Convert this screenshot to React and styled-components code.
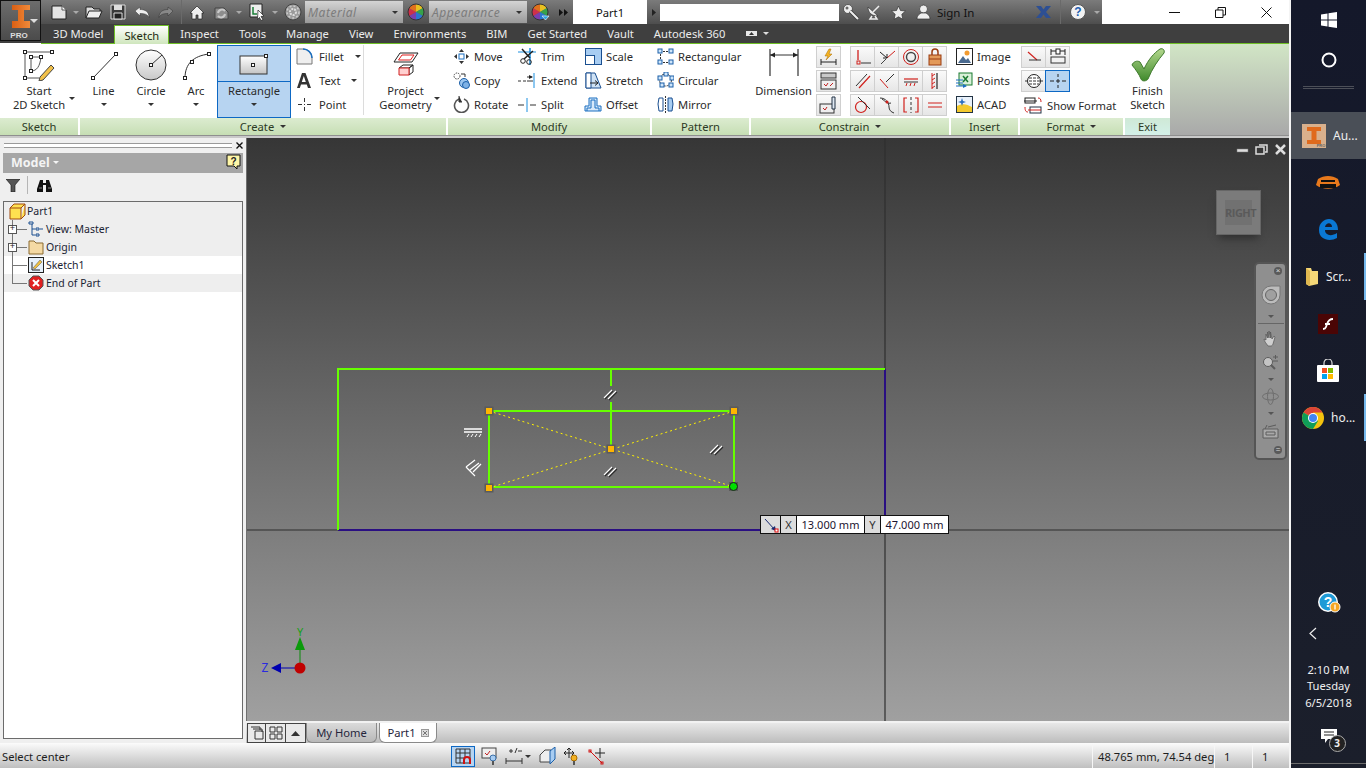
import React from "react";
import styled, { createGlobalStyle } from "styled-components";

const GlobalStyle = createGlobalStyle`
  html, body { margin: 0; padding: 0; overflow: hidden; background: #171b28; }
  body { font-family: "Noto Sans", "Open Sans", sans-serif; font-size: 11.2px; color: #2b2b2b; }
`;

/* ---------- small helpers ---------- */
const Svg = ({ w, h, children }) => (
  <svg width={w} height={h} viewBox={`0 0 ${w} ${h}`} fill="none" style={{ display: "block", flex: "none" }}>
    {children}
  </svg>
);
const Caret = styled.span`
  display: block;
  flex: none;
  width: 0;
  height: 0;
  border-left: 3px solid transparent;
  border-right: 3px solid transparent;
  border-top: 3px solid ${(p) => p.$color || "#333"};
`;

/* ---------- quick access icons ---------- */
const NewIcon = () => (
  <Svg w={16} h={15}><path d="M1 1h10l4 4v9H1z" fill="#e4e4e4" stroke="#222" /><path d="M11 1v4h4" fill="#fff" stroke="#555" /></Svg>
);
const OpenIcon = () => (
  <Svg w={18} h={14}><path d="M1 13V2h6l2 2h6v2" fill="#ddd" stroke="#222" /><path d="M1 13l3-7h13l-3 7z" fill="#eee" stroke="#222" /></Svg>
);
const SaveIcon = () => (
  <Svg w={16} h={16}><path d="M1 1h14v14H1z" fill="#3a3a3a" stroke="#ddd" /><path d="M4 1h8v5H4z" fill="#ddd" /><path d="M4 9h8v6H4z" fill="#222" stroke="#ddd" /></Svg>
);
const ArrowBack = ({ color, flip }) => (
  <Svg w={16} h={12}>
    <g transform={flip ? "matrix(-1 0 0 1 16 0)" : undefined}>
      <path d="M1 5l5-4v2.500c5 0 9 2 9 8-1.500-3-4-4-9-4V10z" fill={color} stroke="#333" strokeWidth=".5" />
    </g>
  </Svg>
);
const HomeIcon = () => (
  <Svg w={16} h={15}><path d="M8 1L1 8h2v6h4v-4h2v4h4V8h2z" fill="#eee" stroke="#222" strokeWidth=".7" /></Svg>
);
const UpdateIcon = () => (
  <Svg w={18} h={15}><path d="M2 3h9l4 4v7H2z" fill="#8d8d8d" stroke="#444" /><path d="M5 8a4 4 0 0 1 7-2M12 9a4 4 0 0 1-7 2" stroke="#c9c9c9" strokeWidth="2" /></Svg>
);
const SelectIcon = () => (
  <Svg w={17} h={18}><path d="M1 1h12v13H1z" fill="#eee" stroke="#222" /><path d="M4 4v7h4" stroke="#1a7f37" strokeWidth="1.500" /><path d="M9 7l6 6-3 .500 2 3-2 1-1.500-3-2 2z" fill="#fff" stroke="#222" strokeWidth=".7" /></Svg>
);
const MaterialBall = () => (
  <Svg w={18} h={18}><circle cx="9" cy="9" r="8" fill="#9a9a9a" stroke="#444" /><circle cx="9" cy="9" r="3" stroke="#ddd" strokeWidth="2" strokeDasharray="2 1" /><circle cx="9" cy="9" r="6" stroke="#ccc" strokeWidth="1.500" strokeDasharray="2 2" /></Svg>
);
const ColorWheel = ({ drop }) => (
  <Svg w={19} h={19}>
    <path d="M9 9V1a8 8 0 0 1 7 4z" fill="#e8c020" />
    <path d="M9 9l7-4a8 8 0 0 1 0 8z" fill="#37a24a" />
    <path d="M9 9l7 4a8 8 0 0 1-7 4z" fill="#2b78d0" />
    <path d="M9 9v8a8 8 0 0 1-7-4z" fill="#7a3fb0" />
    <path d="M9 9l-7 4a8 8 0 0 1 0-8z" fill="#d0304a" />
    <path d="M9 9L2 5a8 8 0 0 1 7-4z" fill="#e0701c" />
    <circle cx="9" cy="9" r="8" stroke="#333" />
    {drop && <path d="M11 13h7l-3.500 4z" fill="#29a6e0" stroke="#fff" strokeWidth=".6" />}
  </Svg>
);
const WrenchIcon = () => (
  <Svg w={17} h={17}><circle cx="5" cy="5" r="4.500" fill="#eee" stroke="#333" strokeWidth=".7" /><path d="M7 7l8 8" stroke="#333" strokeWidth="3.400" /><path d="M7 7l8 8" stroke="#eee" strokeWidth="2.200" /><circle cx="4" cy="4" r="1.500" fill="#666" /></Svg>
);
const SatelliteIcon = () => (
  <Svg w={16} h={16}><path d="M2 3c0 6 4 9 10 9z" fill="#eee" stroke="#333" strokeWidth=".7" /><path d="M7 8l6-6M6 12l-2 3h7l-2-3" stroke="#eee" strokeWidth="1.500" /></Svg>
);
const StarIcon = () => (
  <Svg w={15} h={15}><path d="M7.500 1l2 4.500 5 .500-3.700 3.300 1 5-4.300-2.500-4.300 2.500 1-5L.5 6l5-.5z" fill="#eee" stroke="#333" strokeWidth=".7" /></Svg>
);
const PersonIcon = () => (
  <Svg w={15} h={16}><circle cx="7.500" cy="5" r="4" fill="#eee" stroke="#333" strokeWidth=".7" /><path d="M1 15c0-4 3-5 4-6h5c1 1 4 2 4 6z" fill="#eee" stroke="#333" strokeWidth=".7" /></Svg>
);
const ExchangeIcon = () => (
  <Svg w={15} h={12}><path d="M0 0h5l2.500 3.500L10 0h5l-5 6 5 6h-5L7.500 8.500 5 12H0l5-6z" fill="#2d4f93" /></Svg>
);
const HelpRound = () => (
  <Svg w={16} h={16}><circle cx="8" cy="8" r="7.500" fill="#f3f3f3" stroke="#555" /><text x="8" y="12" textAnchor="middle" fontSize="12" fontWeight="700" fontFamily="Liberation Sans" fill="#1f5fb0">?</text></Svg>
);

/* ---------- ribbon icons ---------- */
const Handle = ({ x, y }) => <rect x={x - 1.500} y={y - 1.500} width="3" height="3" fill="#fff" stroke="#222" />;
const StartSketchIcon = () => (
  <Svg w={32} h={32}>
    <path d="M2 3h27M2 3v26M2 29h14" stroke="#555" />
    <path d="M8 8h10M8 8v14M8 22c6 0 9-5 10-14" stroke="#555" />
    <Handle x={2} y={3} /><Handle x={29} y={3} /><Handle x={2} y={29} /><Handle x={8} y={8} /><Handle x={18} y={8} /><Handle x={8} y={22} />
    <path d="M17 28l11-12 3 3-11 12-4 1z" fill="#f2c14a" stroke="#444" />
  </Svg>
);
const LineIcon = () => (
  <Svg w={30} h={32}><path d="M4 29L27 5" stroke="#333" /><Handle x={4} y={29} /><Handle x={27} y={5} /></Svg>
);
const CircleIcon = () => (
  <Svg w={32} h={32}><defs><linearGradient id="cg" x1="0" y1="0" x2="0" y2="1"><stop stopColor="#fff" /><stop offset="1" stopColor="#c8c8c8" /></linearGradient></defs><circle cx="16" cy="16" r="15" fill="url(#cg)" stroke="#333" /><path d="M16 16L27 6" stroke="#333" /><Handle x={16} y={16} /></Svg>
);
const ArcIcon = () => (
  <Svg w={30} h={32}><path d="M4 29c0-14 8-22 24-24" stroke="#333" /><Handle x={4} y={29} /><Handle x={11} y={13} /><Handle x={28} y={5} /></Svg>
);
const RectIcon = () => (
  <Svg w={30} h={22}><defs><linearGradient id="rg" x1="0" y1="0" x2="0" y2="1"><stop stopColor="#fff" /><stop offset="1" stopColor="#c4c4c4" /></linearGradient></defs><rect x="1" y="3" width="27" height="18" fill="url(#rg)" stroke="#333" /><Handle x={14} y={12} /><Handle x={27} y={3} /></Svg>
);
const ProjectIcon = () => (
  <Svg w={26} h={30}>
    <path d="M7 3h18l-6 9H1z" fill="#fff" stroke="#222" /><path d="M9 5h12l-3.500 5H5.500z" stroke="#e02020" />
    <path d="M6 18l4-3h10l-4 3zM16 18l4-3v7l-4 3z" fill="#fff" stroke="#222" /><path d="M6 18h10v7H6z" fill="#ffd0d0" stroke="#d02020" />
  </Svg>
);
const FilletIcon = () => (
  <Svg w={17} h={17}><path d="M1 16V1h6c5 0 9 4 9 9v6z" fill="#efefef" stroke="#777" /><path d="M7 1c5 0 9 4 9 9" stroke="#1b6fc0" strokeWidth="1.500" /></Svg>
);
const TextIcon = () => (
  <Svg w={16} h={17}><path d="M6 1h3.500L15 16h-3l-1.200-3.500H5L3.800 16H1zM5.800 10h4L7.800 4z" fill="#333" fillRule="evenodd" /></Svg>
);
const PointIcon = () => (
  <Svg w={15} h={15}><path d="M7.500 1v4M7.500 10v4M1 7.500h4M10 7.500h4" stroke="#333" /><rect x="7" y="7" width="1" height="1" fill="#333" /></Svg>
);
const MoveIcon = () => (
  <Svg w={17} h={17}><path d="M8.500 1l2.500 3H6zM8.500 16L6 13h5zM1 8.500L4 6v5zM16 8.500L13 6v5z" fill="#333" /><rect x="6" y="6" width="5" height="5" fill="#fff" stroke="#1b6fc0" /></Svg>
);
const CopyIcon = () => (
  <Svg w={17} h={17}><circle cx="11" cy="11" r="4.500" fill="#9cc6f0" stroke="#1b5fa8" /><circle cx="13" cy="13" r="3.500" fill="#7fb2e6" stroke="#1b5fa8" /><circle cx="4" cy="4" r="3" fill="#fff" stroke="#444" strokeDasharray="1.500 1" /><path d="M8 2h4v3" stroke="#333" /></Svg>
);
const RotateIcon = () => (
  <Svg w={17} h={17}><path d="M6 3a7 7 0 1 0 5 0" stroke="#555" strokeWidth="1.600" /><path d="M6 0v6h3" fill="#333" stroke="#333" /></Svg>
);
const TrimIcon = () => (
  <Svg w={18} h={17}><path d="M12 0v17" stroke="#1b8fe0" strokeWidth="1.500" /><path d="M0 4h18" stroke="#1b8fe0" /><path d="M4 1l8 9M15 3l-9 8" stroke="#222" strokeWidth="1.500" /><circle cx="5" cy="13" r="2.300" stroke="#222" /><circle cx="11" cy="14" r="2.300" stroke="#222" /></Svg>
);
const ExtendIcon = () => (
  <Svg w={18} h={17}><path d="M16 1v15" stroke="#1b8fe0" /><path d="M0 9h3M5 9h3M9 5h5" stroke="#333" /><path d="M11 3l4 2-4 2z" fill="#222" /><path d="M9 9h6" stroke="#333" /></Svg>
);
const SplitIcon = () => (
  <Svg w={18} h={17}><path d="M9 2v14" stroke="#1b8fe0" /><path d="M0 9h6M12 9h6" stroke="#333" /></Svg>
);
const ScaleIcon = () => (
  <Svg w={17} h={17}><rect x=".5" y=".5" width="16" height="16" fill="#a8cdf2" stroke="#1a4f90" /><rect x=".5" y="7.500" width="9" height="9" fill="#fff" stroke="#1a4f90" /></Svg>
);
const StretchIcon = () => (
  <Svg w={17} h={17}><path d="M1 1h9l6 15H1z" fill="#cfe2f5" stroke="#1a4f90" /><path d="M1 1h5v15H1z" fill="#fff" stroke="#1a4f90" /><path d="M5 11h8M10 8.500l3 2.500-3 2.500" stroke="#222" /></Svg>
);
const OffsetIcon = () => (
  <Svg w={18} h={17}><path d="M1 15V10h4V2h8v8h4v5z" fill="#d7e9fa" stroke="#1a6fc0" /><path d="M3 15v-3h4V4h4v8h4v3" stroke="#1a6fc0" /></Svg>
);
const RectPatternIcon = () => {
  const nodes = [[2, 2], [13, 2], [2, 13], [13, 13]];
  return (
    <Svg w={17} h={17}>
      <path d="M3 3.500h11M3.500 3v11M3 14.500h11" stroke="#333" strokeDasharray="2 1" />
      {nodes.map((n) => <rect key={n.join()} x={n[0] - 1} y={n[1] - 1} width="4" height="4" fill="#cfe6fb" stroke="#1b5fa8" />)}
    </Svg>
  );
};
const CircPatternIcon = () => {
  const nodes = [[8, 1], [14, 5], [13, 12], [4, 12], [2, 5]];
  return (
    <Svg w={17} h={17}>
      <circle cx="8.500" cy="8" r="6" stroke="#333" strokeDasharray="2 1" />
      {nodes.map((n) => <rect key={n.join()} x={n[0] - 1} y={n[1] - 1} width="4" height="4" fill="#cfe6fb" stroke="#1b5fa8" />)}
    </Svg>
  );
};
const MirrorIcon = () => (
  <Svg w={17} h={17}><path d="M8.500 0v17" stroke="#333" strokeDasharray="2 1" /><path d="M11 2h4l1 6-1 7h-4z" fill="#a8cdf2" stroke="#1a4f90" /><path d="M6 2H2L1 8l1 7h4z" fill="#fff" stroke="#1a4f90" /></Svg>
);
const DimensionIcon = () => (
  <Svg w={30} h={32}><path d="M1 0v27M29 0v27" stroke="#333" strokeWidth="1.200" /><path d="M1 6h28" stroke="#333" /><path d="M1 6l5-2.500v5zM29 6l-5-2.500v5z" fill="#222" /></Svg>
);
const AutoDimIcon = () => (
  <Svg w={19} h={18}><path d="M10 1L6 8h3l-2 4 6-6h-3l2-5z" fill="#f4b223" stroke="#a86c00" strokeWidth=".5" /><path d="M2 11v6M17 11v6M2 14h15" stroke="#222" /></Svg>
);
const ShowConstraintsIcon = () => (
  <Svg w={19} h={18}><rect x="2" y="1" width="15" height="5" fill="#c9c9c9" stroke="#333" /><rect x="2" y="8" width="15" height="9" fill="#eee" stroke="#333" /><path d="M5 12l2 2 2-3M11 14l3-3" stroke="#c02020" /></Svg>
);
const ConstraintSettingsIcon = () => (
  <Svg w={19} h={18}><rect x="1" y="8" width="14" height="9" fill="#eee" stroke="#333" /><path d="M4 12l2 2 2-3" stroke="#c02020" /><path d="M13 1v12h3V1z" fill="#dfe8f2" stroke="#234" /></Svg>
);
const Con = ({ children }) => <Svg w={18} h={18}>{children}</Svg>;
const red = "#d0201c";
const constraintGrid = [
  <Con><path d="M4 2v10" stroke={red} strokeWidth="1.300" /><rect x="3" y="13" width="3" height="3" stroke={red} /><path d="M7 15h10" stroke="#333" /></Con>,
  <Con><path d="M9 10l8-7" stroke={red} /><path d="M2 4l7 6M9 6v4H5" stroke="#222" /><path d="M3 16l5-5" stroke="#444" /></Con>,
  <Con><circle cx="9" cy="9" r="7.500" stroke={red} /><circle cx="9" cy="9" r="4.500" stroke="#444" strokeWidth="1.400" /></Con>,
  <Con><rect x="3" y="7" width="12" height="10" fill="#e39a5a" stroke="#9b3d10" /><path d="M6 7V4a3 3 0 0 1 6 0v3" stroke="#9b3d10" strokeWidth="1.500" /><path d="M3 11h12" stroke="#9b3d10" /></Con>,
  <Con><path d="M2 14L13 2" stroke="#333" /><path d="M5 16L16 4" stroke={red} strokeWidth="1.200" /></Con>,
  <Con><path d="M8 10L16 2" stroke="#333" /><path d="M2 7l8 9" stroke={red} /></Con>,
  <Con><path d="M2 7h14" stroke={red} strokeWidth="1.200" /><path d="M2 10h14" stroke="#333" /><path d="M5 11l-1 3M9 11l-1 3M13 11l-1 3" stroke={red} /></Con>,
  <Con><path d="M11 1v16" stroke="#333" strokeWidth="1.300" /><path d="M6 1v16M6 4l3-2M6 8l3-2M6 12l3-2M6 16l3-2" stroke={red} /></Con>,
  <Con><circle cx="7" cy="11" r="5.500" stroke={red} strokeWidth="1.200" /><path d="M4 1l12 12" stroke="#333" /></Con>,
  <Con><path d="M2 2c6 0 9 5 9 9 0 3 2 5 5 6M4 3c4 3 6 5 9 4" stroke="#333" /><circle cx="9" cy="6" r="1.500" fill={red} /></Con>,
  <Con><path d="M5 2H2v14h3M13 2h3v14h-3" stroke={red} strokeWidth="1.200" /><path d="M9 1v16" stroke="#333" strokeDasharray="3 2" /></Con>,
  <Con><path d="M2 7h14M2 11h14" stroke={red} strokeWidth="1.200" /></Con>,
];
const ImageIcon = () => (
  <Svg w={17} h={17}><rect x=".5" y=".5" width="16" height="16" fill="#fff" stroke="#222" /><circle cx="11" cy="5" r="2.500" fill="#f29b30" /><path d="M2 15l5-7 3 4 2-2 3 5z" fill="#4a6a90" /></Svg>
);
const PointsIcon = () => (
  <Svg w={18} h={17}><rect x="4" y="1" width="13" height="12" fill="#d9f0d9" stroke="#1a7a30" /><path d="M8 4l5 6M13 4l-5 6" stroke="#1a7a30" strokeWidth="1.500" /><path d="M1 8h7M1 11h7M1 14h10" stroke="#1b6fc0" /><path d="M8 12l4 2-4 2z" fill="#1b6fc0" /></Svg>
);
const AcadIcon = () => (
  <Svg w={17} h={17}><rect x=".5" y=".5" width="16" height="16" fill="#eaf2fb" stroke="#234" /><path d="M1 10c5-3 10-2 15 1v5H1z" fill="#f2c92e" /><path d="M6 2l1 3 3 1-3 1-1 3-1-3-3-1 3-1z" fill="#2b6fc0" /></Svg>
);
const ShowFormatIcon = () => (
  <Svg w={18} h={18}><rect x="1" y="2" width="10" height="5" fill="#fff" stroke="#222" /><path d="M0 5h13" stroke="#222" /><rect x="6" y="11" width="11" height="6" fill="#fff" stroke="#234" /><path d="M4 14h13" stroke={red} /><path d="M14 2c2 0 3 1 3 4M4 16c-2 0-3-1-3-5" stroke={red} /></Svg>
);
const FormatCenterIcon = () => (
  <Svg w={18} h={18}><path d="M9 2v3M9 7v4M9 13v3M1 9h4M7 9h4M13 9h4" stroke="#222" /></Svg>
);
const DimTextIcon = () => (
  <Svg w={18} h={18}><path d="M2 1v6M16 1v6M2 3h14" stroke="#222" /><rect x="7" y="1" width="4" height="5" fill="#fff" stroke="#222" /><rect x="2" y="9" width="14" height="6" fill="#f2f2f2" stroke="#333" /></Svg>
);
const AngleRedIcon = () => (
  <Svg w={18} h={18}><path d="M3 4l9 8" stroke={red} strokeWidth="1.200" /><path d="M4 12h12" stroke="#333" /></Svg>
);
const CenterlineIcon = () => (
  <Svg w={18} h={18}><circle cx="9" cy="9" r="6.500" fill="#fff" stroke="#222" /><path d="M0 9h18M4 6h10M4 12h10" stroke="#333" strokeDasharray="3 1" /></Svg>
);
const CheckIcon = () => (
  <Svg w={34} h={34}>
    <defs><linearGradient id="ck" x1="0" y1="0" x2="0" y2="1"><stop stopColor="#b4d88e" /><stop offset="1" stopColor="#3f8a2c" /></linearGradient></defs>
    <path d="M1 17c1-3 5-5 8-3l4 7C17 12 23 5 29 1c3-1 5 1 4 4-6 7-12 16-16 26-1 2-6 3-7 0-2-5-5-9-9-14z" fill="url(#ck)" stroke="#3f7a2c" />
  </Svg>
);

/* ---------- layout: header ---------- */
const Screen = styled.div`
  width: 1366px;
  height: 768px;
  display: flex;
  overflow: hidden;
`;
const AppWindow = styled.div`
  width: 1289px;
  height: 768px;
  display: flex;
  flex-direction: column;
  background: #efefef;
  border-right: 2px solid #f4f4f4;
`;
const Header = styled.header`
  display: flex;
  height: 43px;
  background: #3f3f3f;
`;
const AppLogo = styled.div`
  width: 39px;
  height: 39px;
  flex: none;
  border: 1px solid #111;
  background: linear-gradient(#6d6d6d, #4b4b4b);
  display: flex;
  flex-direction: column;
  align-items: center;
  position: relative;
  margin-bottom: 2px;
`;
const ProLabel = styled.span`
  font-size: 8px;
  font-weight: 700;
  line-height: 9px;
  color: #ddd;
  margin-left: -3px;
  font-family: "Liberation Sans", sans-serif;
`;
const LogoCaret = styled(Caret)`
  position: absolute;
  right: 2px;
  top: 18px;
  border-left-width: 4px;
  border-right-width: 4px;
  border-top-width: 4px;
`;
const HeaderRows = styled.div`
  flex: 1;
  display: flex;
  flex-direction: column;
  min-width: 0;
`;
const TitleBar = styled.div`
  height: 24px;
  display: flex;
  align-items: stretch;
  padding-left: 7px;
  background: linear-gradient(#7b7b7b, #4e4e4e);
`;
const Slot = styled.div`
  width: ${(p) => p.$w}px;
  flex: none;
  display: flex;
  align-items: center;
  justify-content: center;
`;
const TitleSep = styled(Slot)`
  &::before {
    content: "";
    width: 1px;
    height: 24px;
    background: #6a6a6a;
  }
`;
const StyleCombo = styled.div`
  width: ${(p) => p.$w}px;
  flex: none;
  margin: 1px 0;
  display: flex;
  align-items: center;
  justify-content: space-between;
  padding: 0 5px 0 3px;
  box-sizing: border-box;
  background: linear-gradient(#d4d4d4, #9a9a9a);
  font-style: italic;
  font-size: 12px;
  letter-spacing: .5px;
  color: #7c7c7c;
`;
const DocTitle = styled.div`
  width: 74px;
  flex: none;
  background: #fff;
  color: #111;
  display: flex;
  align-items: center;
  justify-content: center;
`;
const SearchBox = styled.div`
  width: 179px;
  flex: none;
  margin: 4px 0 3px;
  background: #fff;
`;
const SignIn = styled(Slot)`
  justify-content: flex-start;
  padding-left: 2px;
  box-sizing: border-box;
  color: #111;
  font-size: 11.5px;
`;
const WindowButtons = styled.div`
  flex: 1;
  background: #fff;
  display: flex;
  justify-content: flex-end;
`;
const TabBar = styled.nav`
  height: 19px;
  display: flex;
  align-items: stretch;
  padding-left: 2px;
  border-bottom: 1px solid #6ebf26;
  position: relative;
`;
const Tab = styled.div`
  padding: 0 10px;
  display: flex;
  align-items: center;
  gap: 5px;
  color: #ececec;
  white-space: nowrap;
  ${(p) =>
    p.$active &&
    `
    color: #1e2a12;
    padding: 0 9px;
    margin: 0 1px;
    height: 19px;
    background: linear-gradient(#ffffff, #cfe6bd);
    border: 1px solid #6ebf26;
    border-bottom: 0;
    box-sizing: border-box;
    margin-top: 1px;
  `}
`;

/* ---------- layout: ribbon ---------- */
const Ribbon = styled.section`
  height: 93px;
  flex: none;
  display: flex;
  gap: 2px;
  background: #fff;
  border-bottom: 1px solid #8f8f8f;
  box-sizing: border-box;
`;
const RibbonEdge = styled.div`
  height: 2px;
  flex: none;
  background: #c9c9c9;
`;
const PanelBox = styled.div`
  width: ${(p) => p.$w}px;
  flex: none;
  display: flex;
  flex-direction: column;
`;
const PanelBody = styled.div`
  height: 75px;
  display: flex;
  align-items: flex-start;
  background: #fff;
`;
const PanelFooter = styled.div`
  height: 17px;
  display: flex;
  align-items: center;
  justify-content: center;
  gap: 6px;
  color: #2c3a25;
  background: ${(p) => (p.$exit ? "linear-gradient(#cfe9d6, #d3f0e8)" : "linear-gradient(#dcecd0, #c6deb4)")};
`;
const RibbonFill = styled.div`
  flex: 1;
  background: linear-gradient(#d2e6c6, #a9a9a9);
  margin-left: -2px;
`;
const BigButton = styled.div`
  width: ${(p) => p.$w}px;
  height: 75px;
  flex: none;
  box-sizing: border-box;
  display: flex;
  flex-direction: column;
  align-items: center;
  position: relative;
  line-height: 14px;
  text-align: center;
  padding-top: 3px;
  ${(p) =>
    p.$active &&
    `
    height: 73px;
    margin-top: 2px;
    padding-top: 0;
    background: #b7d4f1;
    border: 1px solid #0d68c4;
  `}
`;
const BigIcon = styled.div`
  height: ${(p) => (p.$active ? 35 : 38)}px;
  align-self: stretch;
  display: flex;
  align-items: center;
  justify-content: center;
  flex: none;
  ${(p) => p.$active && "border-bottom: 1px solid #0d68c4; margin-bottom: 2px;"}
`;
const BigLabel = styled.div`
  white-space: nowrap;
`;
const UnderCaret = styled(Caret)`
  margin-top: 5px;
`;
const SideCaret = styled(Caret)`
  position: absolute;
  right: ${(p) => p.$right}px;
  top: 54px;
`;
const SmallColumn = styled.div`
  width: ${(p) => p.$w}px;
  flex: none;
  padding: 1px 0 0 ${(p) => p.$pad ?? 5}px;
  box-sizing: border-box;
`;
const SmallRow = styled.div`
  height: 24px;
  display: flex;
  align-items: center;
  gap: ${(p) => p.$gap ?? 5}px;
  white-space: nowrap;
`;
const RowIcon = styled.div`
  width: 18px;
  display: flex;
  justify-content: center;
  flex: none;
`;
const RowCaret = styled(Caret)`
  margin-left: 5px;
`;
const VerticalRule = styled.div`
  width: 1px;
  height: 70px;
  margin: 2px 1px 0 1px;
  background: #dcdcdc;
  flex: none;
`;
const TileGrid = styled.div`
  display: grid;
  grid-template-columns: repeat(${(p) => p.$cols}, 24px);
  grid-auto-rows: 22px;
  row-gap: 2px;
  margin: 3px ${(p) => p.$mr ?? 0}px 0 ${(p) => p.$ml ?? 0}px;
  flex: none;
`;
const Tile = styled.div`
  display: flex;
  align-items: center;
  justify-content: center;
  box-sizing: border-box;
  border: 1px solid ${(p) => (p.$on ? "#0d68c4" : "#cfcfcf")};
  background: ${(p) => (p.$on ? "#b7d4f1" : "linear-gradient(#fafafa, #e6e6e6)")};
  margin-left: -1px;
`;
const FormatColumn = styled.div`
  display: flex;
  flex-direction: column;
  align-items: flex-start;
`;

const Panel = ({ w, title, caret, exit, children }) => (
  <PanelBox $w={w}>
    <PanelBody>{children}</PanelBody>
    <PanelFooter $exit={exit}>
      {title}
      {caret && <Caret />}
    </PanelFooter>
  </PanelBox>
);
const Big = ({ w, icon, lines, active, under, side }) => (
  <BigButton $w={w} $active={active}>
    <BigIcon $active={active}>{icon}</BigIcon>
    {lines.map((l) => <BigLabel key={l}>{l}</BigLabel>)}
    {under && <UnderCaret />}
    {side != null && <SideCaret $right={side} />}
  </BigButton>
);
const SmallStack = ({ w, pad, gap, items }) => (
  <SmallColumn $w={w} $pad={pad}>
    {items.map(([label, icon, caret]) => (
      <SmallRow key={label} $gap={gap}>
        <RowIcon>{icon}</RowIcon>
        {label}
        {caret && <RowCaret />}
      </SmallRow>
    ))}
  </SmallColumn>
);

/* ---------- layout: body ---------- */
const Workspace = styled.div`
  flex: 1;
  min-height: 0;
  display: flex;
`;
const BrowserPane = styled.aside`
  width: 246px;
  flex: none;
  display: flex;
  flex-direction: column;
  box-sizing: border-box;
  padding: 0 3px 4px;
  background: #efefef;
`;
const GripRow = styled.div`
  height: 14px;
  display: flex;
  align-items: center;
  gap: 4px;
  margin: 0 0 0 1px;
  flex: none;
`;
const GripLines = styled.div`
  flex: 1;
  height: 3px;
  border-top: 1px solid #9a9a9a;
  border-bottom: 1px solid #9a9a9a;
  background: #fff;
`;
const ModelHeader = styled.div`
  height: 20px;
  flex: none;
  margin-top: 1px;
  display: flex;
  align-items: center;
  justify-content: space-between;
  padding: 0 2px 2px 8px;
  box-sizing: border-box;
  background: #a6a6a6;
  color: #f4f4f4;
  font-size: 12.5px;
  font-weight: 700;
`;
const ModelTitle = styled.div`
  display: flex;
  align-items: center;
  gap: 3px;
`;
const PaneToolbar = styled.div`
  height: 28px;
  box-sizing: border-box;
  flex: none;
  display: flex;
  align-items: center;
  padding: 0 0 4px 3px;
`;
const ToolDivider = styled.div`
  width: 1px;
  height: 18px;
  background: #b5b5b5;
  margin: 0 9px 0 7px;
`;
const TreeBox = styled.div`
  flex: 1;
  background: #fff;
  border: 1px solid #6b6b6b;
`;
const TreeRow = styled.div`
  height: 18px;
  display: flex;
  align-items: center;
  background: ${(p) => (p.$white ? "#fff" : "#eeeeee")};
  padding-left: ${(p) => (p.$root ? 5 : 0)}px;
  color: #1a2433;
  font-size: 10.500px;
  gap: ${(p) => (p.$root ? 1 : 2)}px;
  white-space: nowrap;
`;
const TreeGutter = styled.div`
  width: 24px;
  margin-right: -2px;
  height: 18px;
  flex: none;
  position: relative;
  &::before {
    content: "";
    position: absolute;
    left: 8px;
    top: 0;
    width: 1px;
    height: ${(p) => (p.$last ? 9 : 18)}px;
    background: #777;
  }
  &::after {
    content: "";
    position: absolute;
    left: 8px;
    top: 9px;
    width: 15px;
    height: 1px;
    background: #777;
  }
`;
const PlusBox = styled.span`
  position: absolute;
  z-index: 1;
  left: 4px;
  top: 5px;
  width: 7px;
  height: 7px;
  border: 1px solid #555;
  background: #fff;
  font: 9px/7px "Liberation Mono", monospace;
  color: #222;
  text-align: center;
`;
const CanvasColumn = styled.div`
  flex: 1;
  min-width: 0;
  display: flex;
  flex-direction: column;
`;
const Canvas = styled.main`
  flex: 1;
  min-height: 0;
  position: relative;
  overflow: hidden;
  border-left: 1px solid #6f6f6f;
  background: linear-gradient(#363636, #a0a0a0);
`;
const SketchLayer = styled.svg`
  position: absolute;
  left: 0;
  top: 0;
  width: 1043px;
  height: 583px;
  display: block;
`;
const CanvasControls = styled.div`
  position: absolute;
  right: 2px;
  top: 6px;
  display: flex;
  gap: 6px;
`;
const ViewCube = styled.div`
  position: absolute;
  left: 969px;
  top: 52px;
  width: 45px;
  height: 45px;
  background: #7b7b7b;
  border: 1px solid #666;
  box-sizing: border-box;
  box-shadow: 0 6px 8px -3px #2e2e2e;
  display: flex;
  align-items: center;
  justify-content: center;
`;
const CubeFace = styled.span`
  background: #717171;
  padding: 5px 0;
  width: 27px;
  text-align: center;
  font: 700 11px "Open Sans", sans-serif;
  letter-spacing: -0.5px;
  color: #5a5a5a;
`;
const NavBar = styled.div`
  position: absolute;
  left: 1007px;
  top: 124px;
  width: 33px;
  height: 198px;
  box-sizing: border-box;
  border: 2px solid #555;
  border-radius: 5px;
  background: #8f8f8f;
  display: flex;
  flex-direction: column;
  align-items: center;
`;
const NavCap = styled.span`
  width: 8px;
  height: 8px;
  border-radius: 50%;
  background: #5a5a5a;
  color: #ddd;
  font: 8px/8px "Liberation Sans", sans-serif;
  text-align: center;
  align-self: flex-end;
  margin: ${(p) => (p.$bottom ? "auto 3px 4px 0" : "3px 3px 0 0")};
`;
const NavItem = styled.div`
  margin-top: ${(p) => p.$mt || 0}px;
  display: flex;
  flex-direction: column;
  align-items: center;
`;
const NavRule = styled.div`
  width: 26px;
  height: 1px;
  background: #666;
  margin-top: 5px;
`;
const NavCaret = styled(Caret)`
  margin-top: ${(p) => p.$mt || 4}px;
`;
const CoordBox = styled.div`
  position: absolute;
  left: 513px;
  top: 377px;
  display: flex;
  height: 17px;
  border: 1px solid #111;
  background: #111;
  gap: 1px;
`;
const CoordTag = styled.div`
  background: #dcdcdc;
  width: ${(p) => p.$w}px;
  display: flex;
  align-items: center;
  justify-content: center;
  color: #333;
`;
const CoordValue = styled.div`
  background: #fff;
  width: ${(p) => p.$w}px;
  color: #1b1430;
  display: flex;
  align-items: center;
  justify-content: center;
  font-size: 11px;
`;
const DocTabs = styled.div`
  height: 22px;
  flex: none;
  display: flex;
  align-items: stretch;
  background: linear-gradient(#e8e8e8, #bcbcbc);
  border-top: 2px solid #f2f2f2;
  box-sizing: border-box;
  padding-left: 1px;
`;
const DocSquare = styled.div`
  width: ${(p) => (p.$first ? 19 : 20)}px;
  flex: none;
  box-sizing: border-box;
  border: 1px solid #444;
  border-left-width: ${(p) => (p.$first ? 1 : 0)}px;
  background: #e9e9e9;
  display: flex;
  align-items: center;
  justify-content: center;
`;
const DocTab = styled.div`
  width: ${(p) => p.$w}px;
  flex: none;
  box-sizing: border-box;
  margin-left: ${(p) => p.$ml || 0}px;
  display: flex;
  align-items: center;
  justify-content: center;
  gap: 5px;
  border-radius: 0 0 6px 6px;
  border: 1px solid #8a8a8a;
  border-top: 0;
  background: ${(p) => (p.$active ? "#fff" : "linear-gradient(#dadada, #b8b8b8)")};
  color: #26263c;
`;
const StatusBar = styled.footer`
  height: 25px;
  flex: none;
  box-sizing: border-box;
  display: flex;
  align-items: center;
  background: linear-gradient(#fbfbfb, #bfbfbf);
  color: #1d1d1d;
  padding: 1px 0 0 2px;
`;
const StatusText = styled.div`
  width: 449px;
  flex: none;
`;
const StatusIcons = styled.div`
  display: flex;
  align-items: center;
  flex: none;
`;
const StatusToggle = styled.div`
  width: 24px;
  height: 21px;
  box-sizing: border-box;
  display: flex;
  align-items: center;
  justify-content: center;
  ${(p) => p.$on && "background: #b7d4f1; border: 1px solid #0d68c4;"}
`;
const StatusCell = styled.div`
  width: ${(p) => p.$w}px;
  height: 24px;
  flex: none;
  box-sizing: border-box;
  padding-left: ${(p) => p.$pad}px;
  display: flex;
  align-items: center;
  border-left: 1px solid #f6f6f6;
  white-space: nowrap;
`;
const StatusSpacer = styled.div`
  flex: 1;
`;

/* ---------- layout: windows taskbar ---------- */
const Taskbar = styled.aside`
  width: 75px;
  flex: none;
  display: flex;
  flex-direction: column;
  align-items: stretch;
  background: linear-gradient(180deg, #14182a, #1b1f2b);
  color: #eee;
`;
const TaskSquare = styled.div`
  height: 40px;
  flex: none;
  display: flex;
  align-items: center;
  justify-content: center;
`;
const TaskDivider = styled.div`
  height: 1px;
  margin: 6px 12px 23px;
  border-top: 1px solid #4c4f58;
  border-bottom: 1px solid #4c4f58;
`;
const TaskItem = styled.div`
  height: 47px;
  flex: none;
  box-sizing: border-box;
  display: flex;
  align-items: center;
  gap: 7px;
  padding-left: ${(p) => p.$pad ?? 11}px;
  font-size: 12px;
  color: #eee;
  background: ${(p) => (p.$current ? "#4a4f57" : "transparent")};
  border-right: 2px solid ${(p) => (p.$open ? "#76b9ed" : "transparent")};
`;
const Tray = styled.div`
  margin-top: auto;
  display: flex;
  flex-direction: column;
  align-items: center;
  padding-bottom: 4px;
`;
const TrayChevron = styled.div`
  align-self: flex-start;
  margin: 14px 0 0 17px;
`;
const Clock = styled.div`
  margin-top: 22px;
  text-align: center;
  font-size: 11.2px;
  line-height: 16.500px;
  color: #f0f0f0;
`;
const NotifyWrap = styled.div`
  position: relative;
  margin-top: 17px;
  width: 36px;
  height: 24px;
  display: flex;
  justify-content: center;
`;
const NotifyBadge = styled.span`
  position: absolute;
  left: 18px;
  top: 7px;
  width: 15px;
  height: 15px;
  border-radius: 50%;
  border: 1px solid #aaa;
  background: #222;
  color: #eee;
  font-size: 10px;
  line-height: 15px;
  text-align: center;
  font-weight: 700;
`;
const TrayRule = styled.div`
  align-self: stretch;
  height: 1px;
  background: #6c6c6c;
  margin-top: 11px;
`;

/* ---------- sketch drawing, coordinates are page pixels ---------- */
const sketchGreen = "#66ff00";
const SketchPoint = ({ x, y }) => (
  <g>
    <rect x={x - 4.500} y={y - 4.500} width="9" height="9" fill="#5b5b5b" />
    <rect x={x - 3} y={y - 3} width="6" height="6" fill="#ffb400" />
  </g>
);
const Parallel = ({ x, y }) => (
  <g strokeWidth="2.200">
    <path d={`M${x - 7} ${y + 4}l8-8M${x - 3} ${y + 5}l8-8`} stroke="#2b2b2b" transform="translate(.6 .8)" />
    <path d={`M${x - 7} ${y + 4}l8-8M${x - 3} ${y + 5}l8-8`} stroke="#fff" strokeWidth="1.200" />
  </g>
);
const Sketch = () => (
  <SketchLayer viewBox="247 138 1043 583" fill="none">
    <path d="M885 138V722M247 530H1290" stroke="#2f2f2f" strokeWidth="1.200" />
    <path d="M338 530H762M885 369V530" stroke="#2a0f82" strokeWidth="2" />
    <path d="M338 530V369H885" stroke={sketchGreen} strokeWidth="2" />
    <path d="M611 369V386M611 402V449M489 411H734V487H489Z" stroke={sketchGreen} strokeWidth="2" />
    <path d="M489 411L734 487M734 411L489 488" stroke="#fff200" strokeWidth="1" strokeDasharray="2 3" />
    <SketchPoint x={489} y={411} /><SketchPoint x={734} y={411} /><SketchPoint x={611} y={449} /><SketchPoint x={489} y={488} />
    <rect x="729" y="482" width="9" height="9" fill="#5b5b5b" /><circle cx="733.500" cy="486.500" r="4" fill="#00e000" stroke="#222" />
    <Parallel x={611} y={394} /><Parallel x={611} y={471} /><Parallel x={717} y={449} />
    <g stroke="#fff">
      <path d="M464 429h18M464 432h18" strokeWidth="1.300" />
      <path d="M467 437l2-3M471 437l2-3M475 437l2-3M479 437l2-3" strokeWidth="1" />
      <path d="M466 467l9-7M470 470l9-7M473 472l8-8M466 467l9 9" strokeWidth="1.200" />
    </g>
    <path d="M300 668V645" stroke="#0a8a0a" /><path d="M300 637l5 13h-10z" fill="#0a9a0a" />
    <path d="M300 668H280" stroke="#0000b0" /><path d="M271 668l10-5v10z" fill="#0000b0" />
    <circle cx="300" cy="668" r="5.500" fill="#c00000" />
    <text x="300" y="636" textAnchor="middle" fontSize="11" fontFamily="Noto Sans" fill="#18a018">Y</text>
    <text x="265" y="672" textAnchor="middle" fontSize="12" fontFamily="Noto Sans" fill="#2a2ae0">Z</text>
  </SketchLayer>
);

const NavWheel = () => (
  <Svg w={22} h={22}><path d="M2 11a9 9 0 0 1 9-9h9v9a9 9 0 0 1-18 0z" fill="#bcbcbc" stroke="#777" /><circle cx="11" cy="11" r="5.500" fill="#a0a0a0" stroke="#666" /></Svg>
);
const NavHand = () => (
  <Svg w={16} h={17}><path d="M5 16C3 13 1 11 1 9l2 1V4l1.500 4V2l1.500 6V1l1.500 7V2l1.500 7 2-3 1 1-2 7c-.5 1-1 2-2 2z" fill="#cfcfcf" stroke="#555" strokeWidth=".7" /></Svg>
);
const NavZoom = () => (
  <Svg w={17} h={16}><circle cx="6" cy="8" r="4.500" fill="#c4c4c4" stroke="#5c5c5c" /><path d="M9 11l4 4" stroke="#5c5c5c" strokeWidth="2" /><path d="M11 3h5M13.500 1v4M11 7h5" stroke="#5c5c5c" /></Svg>
);
const NavOrbit = () => (
  <Svg w={17} h={17}><ellipse cx="8.500" cy="8.500" rx="8" ry="3.500" stroke="#6e6e6e" /><ellipse cx="8.500" cy="8.500" rx="3" ry="8" stroke="#6e6e6e" /></Svg>
);
const NavView = () => (
  <Svg w={17} h={15}><path d="M1 5h15v9H1z" fill="#a9a9a9" stroke="#5c5c5c" /><path d="M4 8h9v3H4z" stroke="#5c5c5c" /><path d="M3 5l2-4M6 3l8-2" stroke="#5c5c5c" /></Svg>
);

/* ---------- taskbar icons ---------- */
const WindowsLogo = () => (
  <Svg w={16} h={16}><path d="M0 2.500l6.500-1V7.500H0zM7.500 1.300L16 0v7.500H7.500zM0 8.500h6.500v6L0 13.500zM7.500 8.500H16V16l-8.500-1.300z" fill="#fff" /></Svg>
);
const InventorBadge = () => (
  <Svg w={24} h={24}>
    <rect width="24" height="24" fill="#d9b08c" />
    <path d="M5 3h14v4h-4.500v9H19v4H5v-4h4.500V7H5z" fill="#e06a1c" />
    <text x="19" y="23" textAnchor="middle" fontSize="4" fontWeight="700" fontFamily="Liberation Sans" fill="#666">PRO</text>
  </Svg>
);
const OrangeApp = () => (
  <Svg w={24} h={14}><path d="M2 3c6-4 14-4 20 0l2 6c-7 5-17 5-24 0z" fill="#e8791c" /><rect x="4" y="8" width="16" height="4" fill="#111" /><path d="M5 5h14" stroke="#111" strokeWidth="2" /></Svg>
);
const EdgeIcon = () => (
  <Svg w={20} h={21}><path d="M1 11C1 4 6 0 11 0c5 0 9 4 9 11H7c0 5 6 7 12 3v5c-7 4-18 2-18-8zM7 8h7c0-5-6-5-7 0z" fill="#0a78d4" fillRule="evenodd" /></Svg>
);
const FolderIcon = () => (
  <Svg w={14} h={20}><path d="M1 1h5l1 3h6v13l-9 2-3-2z" fill="#f5d878" /><path d="M1 1v16l4 2V4z" fill="#e0b850" /></Svg>
);
const FlashIcon = () => (
  <Svg w={20} h={20}><rect width="20" height="20" fill="#4a0505" /><path d="M15 5c-4 0-5 2-6 5l-1 3c-.5 1.500-1.500 2-3 2M7 10h5" stroke="#fff" strokeWidth="1.800" /></Svg>
);
const StoreIcon = () => (
  <Svg w={22} h={23}>
    <path d="M7 7V4a4 4 0 0 1 8 0v3" stroke="#ddd" strokeWidth="1.200" />
    <rect y="6" width="22" height="17" rx="1" fill="#fff" />
    <rect x="5" y="9" width="5" height="5" fill="#f25022" /><rect x="11" y="9" width="5" height="5" fill="#7fba00" />
    <rect x="5" y="15" width="5" height="5" fill="#00a4ef" /><rect x="11" y="15" width="5" height="5" fill="#ffb900" />
  </Svg>
);
const ChromeIcon = () => (
  <Svg w={22} h={22}>
    <circle cx="11" cy="11" r="11" fill="#f4c20d" />
    <path d="M11 11L1.500 5.500A11 11 0 0 1 20.500 5.500H11z" fill="#db4437" />
    <path d="M11 11L1.500 5.500A11 11 0 0 0 11 22l5-8z" fill="#0f9d58" />
    <circle cx="11" cy="11" r="5" fill="#fff" /><circle cx="11" cy="11" r="4" fill="#4285f4" />
  </Svg>
);
const HelpTray = () => (
  <Svg w={24} h={22}>
    <circle cx="11" cy="11" r="10" fill="#fff" /><circle cx="11" cy="11" r="8.500" fill="#1e9ad6" />
    <text x="11" y="16" textAnchor="middle" fontSize="14" fontWeight="700" fontFamily="Liberation Sans" fill="#fff">?</text>
    <circle cx="18" cy="16" r="5" fill="#f5a623" stroke="#fff" /><path d="M18 13.500v5" stroke="#fff" strokeWidth="1.300" />
  </Svg>
);

export default function App() {
  return (
    <>
      <GlobalStyle />
      <Screen>
        <AppWindow>
          <Header>
            <AppLogo>
              <Svg w={20} h={30}>
                <defs><linearGradient id="ib" x1="0" y1="0" x2="1" y2="0"><stop stopColor="#d95f14" /><stop offset="1" stopColor="#f08a3a" /></linearGradient></defs>
                <path d="M1 4h18v5h-6v11h6v7H1v-7h6V9H1z" fill="url(#ib)" />
              </Svg>
              <ProLabel>PRO</ProLabel>
              <LogoCaret $color="#ddd" />
            </AppLogo>
            <HeaderRows>
              <TitleBar>
                <Slot $w={22}><NewIcon /></Slot>
                <Slot $w={12}><Caret $color="#aaa" /></Slot>
                <Slot $w={24}><OpenIcon /></Slot>
                <Slot $w={24}><SaveIcon /></Slot>
                <Slot $w={24}><ArrowBack color="#eee" /></Slot>
                <Slot $w={24}><ArrowBack color="#888" flip /></Slot>
                <TitleSep $w={6} />
                <Slot $w={26}><HomeIcon /></Slot>
                <Slot $w={24}><UpdateIcon /></Slot>
                <Slot $w={10}><Caret $color="#aaa" /></Slot>
                <Slot $w={26}><SelectIcon /></Slot>
                <Slot $w={10}><Caret $color="#aaa" /></Slot>
                <Slot $w={25}><MaterialBall /></Slot>
                <StyleCombo $w={98}>Material<Caret /></StyleCombo>
                <Slot $w={26}><ColorWheel /></Slot>
                <StyleCombo $w={98}>Appearance<Caret /></StyleCombo>
                <Slot $w={26}><ColorWheel drop /></Slot>
                <Slot $w={20}><Svg w={9} h={7}><path d="M0 0l4 3.500L0 7zM5 0l4 3.500L5 7z" fill="#111" /></Svg></Slot>
                <DocTitle>Part1</DocTitle>
                <Slot $w={13}><Svg w={4} h={7}><path d="M0 0l4 3.500L0 7z" fill="#222" /></Svg></Slot>
                <SearchBox />
                <Slot $w={24}><WrenchIcon /></Slot>
                <Slot $w={22}><SatelliteIcon /></Slot>
                <Slot $w={27}><StarIcon /></Slot>
                <Slot $w={23}><PersonIcon /></Slot>
                <SignIn $w={80}>Sign In</SignIn>
                <Slot $w={16}><Caret $color="#666" /></Slot>
                <Slot $w={24}><ExchangeIcon /></Slot>
                <TitleSep $w={10} />
                <Slot $w={26}><HelpRound /></Slot>
                <Slot $w={11}><Caret $color="#aaa" /></Slot>
                <WindowButtons>
                  <Slot $w={46}><Svg w={11} h={1}><path d="M0 .5h11" stroke="#111" /></Svg></Slot>
                  <Slot $w={46}><Svg w={11} h={11}><path d="M.5 3h7.500v7.500H.5zM3 3V.5h7.500V8H8" stroke="#111" /></Svg></Slot>
                  <Slot $w={46}><Svg w={11} h={11}><path d="M.5.5l10 10M10.500.5l-10 10" stroke="#111" /></Svg></Slot>
                </WindowButtons>
              </TitleBar>
              <TabBar>
                <Tab>3D Model</Tab>
                <Tab $active>Sketch</Tab>
                <Tab>Inspect</Tab>
                <Tab>Tools</Tab>
                <Tab>Manage</Tab>
                <Tab>View</Tab>
                <Tab>Environments</Tab>
                <Tab>BIM</Tab>
                <Tab>Get Started</Tab>
                <Tab>Vault</Tab>
                <Tab>Autodesk 360</Tab>
                <Tab>
                  <Svg w={13} h={7}><path d="M1 1h11v5H1z" fill="#e8e8e8" /><path d="M4 5l2.500-3L9 5z" fill="#333" /></Svg>
                  <Caret $color="#ddd" />
                </Tab>
              </TabBar>
            </HeaderRows>
          </Header>
          <Ribbon>
            <Panel w={78} title="Sketch">
              <Big w={78} icon={<StartSketchIcon />} lines={["Start", "2D Sketch"]} side={3} />
            </Panel>
            <Panel w={366} title="Create" caret>
              <Big w={47} icon={<LineIcon />} lines={["Line"]} under />
              <Big w={48} icon={<CircleIcon />} lines={["Circle"]} under />
              <Big w={42} icon={<ArcIcon />} lines={["Arc"]} under />
              <Big w={74} icon={<RectIcon />} lines={["Rectangle"]} under active />
              <SmallStack
                w={71}
                pad={4}
                gap={6}
                items={[["Fillet", <FilletIcon />, true], ["Text", <TextIcon />, true], ["Point", <PointIcon />]]}
              />
              <VerticalRule />
              <Big w={81} icon={<ProjectIcon />} lines={["Project", "Geometry"]} side={6} />
            </Panel>
            <Panel w={202} title="Modify">
              <SmallStack w={70} pad={4} gap={4} items={[["Move", <MoveIcon />], ["Copy", <CopyIcon />], ["Rotate", <RotateIcon />]]} />
              <SmallStack w={66} pad={0} gap={5} items={[["Trim", <TrimIcon />], ["Extend", <ExtendIcon />], ["Split", <SplitIcon />]]} />
              <SmallStack w={66} pad={0} gap={4} items={[["Scale", <ScaleIcon />], ["Stretch", <StretchIcon />], ["Offset", <OffsetIcon />]]} />
            </Panel>
            <Panel w={97} title="Pattern">
              <SmallStack w={97} pad={4} gap={4} items={[["Rectangular", <RectPatternIcon />], ["Circular", <CircPatternIcon />], ["Mirror", <MirrorIcon />]]} />
            </Panel>
            <Panel w={198} title="Constrain" caret>
              <Big w={65} icon={<DimensionIcon />} lines={["Dimension"]} />
              <TileGrid $cols={1} $ml={1} $mr={10}>
                <Tile><AutoDimIcon /></Tile>
                <Tile><ShowConstraintsIcon /></Tile>
                <Tile><ConstraintSettingsIcon /></Tile>
              </TileGrid>
              <TileGrid $cols={4}>
                {constraintGrid.map((icon, i) => <Tile key={i}>{icon}</Tile>)}
              </TileGrid>
            </Panel>
            <Panel w={67} title="Insert">
              <SmallStack w={67} pad={4} gap={4} items={[["Image", <ImageIcon />], ["Points", <PointsIcon />], ["ACAD", <AcadIcon />]]} />
            </Panel>
            <Panel w={103} title="Format" caret>
              <FormatColumn>
                <TileGrid $cols={2} $ml={2}>
                  <Tile><AngleRedIcon /></Tile>
                  <Tile><DimTextIcon /></Tile>
                  <Tile><CenterlineIcon /></Tile>
                  <Tile $on><FormatCenterIcon /></Tile>
                </TileGrid>
                <SmallStack w={103} pad={4} gap={5} items={[["Show Format", <ShowFormatIcon />]]} />
              </FormatColumn>
            </Panel>
            <Panel w={45} title="Exit" exit>
              <Big w={45} icon={<CheckIcon />} lines={["Finish", "Sketch"]} />
            </Panel>
            <RibbonFill />
          </Ribbon>
          <RibbonEdge />
          <Workspace>
            <BrowserPane>
              <GripRow>
                <GripLines />
                <Svg w={7} h={7}><path d="M.5.5l6 6M6.500.5l-6 6" stroke="#111" strokeWidth="1.400" /></Svg>
              </GripRow>
              <ModelHeader>
                <ModelTitle>Model<Caret $color="#f4f4f4" /></ModelTitle>
                <Svg w={15} h={16}><path d="M1 1h13v11h-3v3l-3-3H1z" fill="#fff7a8" stroke="#111" /><text x="7.500" y="10.500" textAnchor="middle" fontSize="10" fontWeight="700" fontFamily="Liberation Sans" fill="#222">?</text></Svg>
              </ModelHeader>
              <PaneToolbar>
                <Svg w={14} h={13}><path d="M0 0h14L9 6v7H5V6z" fill="#555" stroke="#111" strokeWidth=".6" /></Svg>
                <ToolDivider />
                <Svg w={15} h={13}><path d="M3 1h3v3h3V1h3l3 9v3H9V6H6v7H0v-3z" fill="#111" /><path d="M2 9h3M11 9h3" stroke="#888" /></Svg>
              </PaneToolbar>
              <TreeBox>
                <TreeRow $root>
                  <Svg w={17} h={17}><path d="M1 5h11v11H1zM1 5l4-4h11l-4 4M12 16l4-4V1" fill="#ffe050" stroke="#a04a10" /></Svg>
                  Part1
                </TreeRow>
                <TreeRow>
                  <TreeGutter><PlusBox>+</PlusBox></TreeGutter>
                  <Svg w={16} h={16}><path d="M1 1h4v2H1zM4 3v11h3M4 8h3M8 7h3v2H8zM8 13h3v2H8zM12 8h3" stroke="#1a4f90" /></Svg>
                  View: Master
                </TreeRow>
                <TreeRow>
                  <TreeGutter><PlusBox>+</PlusBox></TreeGutter>
                  <Svg w={16} h={15}><path d="M1 14V1h5l2 2h7v11z" fill="#f4d9a4" stroke="#8a6a30" /></Svg>
                  Origin
                </TreeRow>
                <TreeRow $white>
                  <TreeGutter />
                  <Svg w={16} h={16}><rect x=".5" y=".5" width="15" height="15" fill="#e6f0fa" stroke="#222" /><path d="M4 13V5M4 13h8" stroke="#222" /><path d="M5 11l7-8 2 2-7 7z" fill="#f0c040" stroke="#555" strokeWidth=".5" /></Svg>
                  Sketch1
                </TreeRow>
                <TreeRow>
                  <TreeGutter $last />
                  <Svg w={16} h={16}><path d="M5 1h6l4 4v6l-4 4H5l-4-4V5z" fill="#e02020" stroke="#555" /><path d="M5 5l6 6M11 5l-6 6" stroke="#fff" strokeWidth="2" /></Svg>
                  End of Part
                </TreeRow>
              </TreeBox>
            </BrowserPane>
            <CanvasColumn>
              <Canvas>
                <Sketch />
                <CanvasControls>
                  <Svg w={13} h={11}><rect x="1" y="5" width="11" height="3" fill="#ddd" stroke="#777" strokeWidth=".5" /></Svg>
                  <Svg w={13} h={11}><path d="M4 1h8v7h-2M1 3h8v7H1z" stroke="#ddd" strokeWidth="1.500" /></Svg>
                  <Svg w={13} h={11}><path d="M2 1l9 9M11 1l-9 9" stroke="#ddd" strokeWidth="2.500" /></Svg>
                </CanvasControls>
                <ViewCube><CubeFace>RIGHT</CubeFace></ViewCube>
                <NavBar>
                  <NavCap>×</NavCap>
                  <NavItem $mt={9}><NavWheel /><NavCaret $color="#555" $mt={9} /></NavItem>
                  <NavRule />
                  <NavItem $mt={6}><NavHand /></NavItem>
                  <NavItem $mt={7}><NavZoom /><NavCaret $color="#555" $mt={8} /></NavItem>
                  <NavItem $mt={7}><NavOrbit /><NavCaret $color="#555" $mt={7} /></NavItem>
                  <NavItem $mt={9}><NavView /></NavItem>
                  <NavCap $bottom>=</NavCap>
                </NavBar>
                <CoordBox>
                  <CoordTag $w={19}>
                    <Svg w={16} h={16}><path d="M2 2l10 11" stroke="#1a2a70" /><path d="M8 12l5 2-1-5z" fill="#1a2a70" /><rect x="12" y="12" width="3" height="3" fill="#fff" stroke="#e01010" /></Svg>
                  </CoordTag>
                  <CoordTag $w={15}>X</CoordTag>
                  <CoordValue $w={67}>13.000 mm</CoordValue>
                  <CoordTag $w={15}>Y</CoordTag>
                  <CoordValue $w={67}>47.000 mm</CoordValue>
                </CoordBox>
              </Canvas>
              <DocTabs>
                <DocSquare $first>
                  <Svg w={14} h={14}><path d="M1 1h9v3M3 3h9v3M5 5h8v8H5z" stroke="#333" /></Svg>
                </DocSquare>
                <DocSquare>
                  <Svg w={14} h={14}><path d="M1 1h5v5H1zM8 1h5v5H8zM1 8h5v5H1zM8 8h5v5H8z" stroke="#333" /></Svg>
                </DocSquare>
                <DocSquare>
                  <Svg w={9} h={5}><path d="M0 5l4.500-5L9 5z" fill="#333" /></Svg>
                </DocSquare>
                <DocTab $w={71}>My Home</DocTab>
                <DocTab $w={58} $ml={2} $active>
                  Part1
                  <Svg w={8} h={8}><rect x=".5" y=".5" width="7" height="7" fill="#ddd" stroke="#999" /><path d="M2 2l4 4M6 2L2 6" stroke="#777" /></Svg>
                </DocTab>
              </DocTabs>
            </CanvasColumn>
          </Workspace>
          <StatusBar>
            <StatusText>Select center</StatusText>
            <StatusIcons>
              <StatusToggle $on>
                <Svg w={17} h={17}><path d="M1 1h14v14M1 1v14h14M1 5h14M1 10h8M5 1v14M10 1v8" stroke="#333" /><path d="M9 16v-4a3 3 0 0 1 6 0v4" stroke="#d01010" strokeWidth="2" /></Svg>
              </StatusToggle>
              <Slot $w={29}>
                <Svg w={17} h={18}><rect x="1" y="1" width="14" height="10" fill="#eee" stroke="#444" /><path d="M4 6l2 2 3-4" stroke="#c02020" /><circle cx="12" cy="11" r="3" fill="#a8cdf2" stroke="#3a6fa8" /><path d="M12 14v4" stroke="#555" strokeWidth="2" /></Svg>
              </Slot>
              <Slot $w={19}>
                <Svg w={18} h={18}><path d="M1 11v6M17 11v6M1 14h16M4 4h4M6 2v4M10 6l2-5M13 4h4" stroke="#333" /></Svg>
              </Slot>
              <Slot $w={10}><Caret /></Slot>
              <Slot $w={28}>
                <Svg w={18} h={18}><path d="M2 8l5-5h6v12H2z" fill="#eee" stroke="#444" /><path d="M12 4l5-4v12l-5 5z" fill="#a8cdf2" stroke="#1a5fa8" /></Svg>
              </Slot>
              <Slot $w={22}>
                <Svg w={18} h={18}><path d="M6 1v10M1 6h10M6 1L4 3M6 1l2 2M1 6l2-2M1 6l2 2M11 6L9 4M11 6L9 8" stroke="#222" /><circle cx="11" cy="11" r="3" fill="#f4b223" stroke="#a86c00" /><path d="M11 14v4" stroke="#555" strokeWidth="2" /></Svg>
              </Slot>
              <Slot $w={27}>
                <Svg w={18} h={18}><path d="M2 4l12 12" stroke="#d01010" /><rect x="1" y="3" width="2" height="2" stroke="#d01010" /><rect x="13" y="15" width="2" height="2" stroke="#d01010" /><path d="M12 1v10M7 6h10" stroke="#222" /></Svg>
              </Slot>
            </StatusIcons>
            <StatusSpacer />
            <StatusCell $w={122} $pad={5}>48.765 mm, 74.54 deg</StatusCell>
            <StatusCell $w={38} $pad={9}>1</StatusCell>
            <StatusCell $w={37} $pad={9}>1</StatusCell>
          </StatusBar>
        </AppWindow>
        <Taskbar>
          <TaskSquare><WindowsLogo /></TaskSquare>
          <TaskSquare>
            <Svg w={16} h={16}><circle cx="8" cy="8" r="6.500" stroke="#fff" strokeWidth="2" /></Svg>
          </TaskSquare>
          <TaskDivider />
          <TaskItem $current><InventorBadge />Au...</TaskItem>
          <TaskItem $pad={25}><OrangeApp /></TaskItem>
          <TaskItem $pad={27}><EdgeIcon /></TaskItem>
          <TaskItem $open $pad={14}><FolderIcon />Scr...</TaskItem>
          <TaskItem $pad={27}><FlashIcon /></TaskItem>
          <TaskItem $pad={26}><StoreIcon /></TaskItem>
          <TaskItem $open><ChromeIcon />ho...</TaskItem>
          <Tray>
            <HelpTray />
            <TrayChevron>
              <Svg w={9} h={13}><path d="M8 1L2 6.500 8 12" stroke="#eee" strokeWidth="1.200" /></Svg>
            </TrayChevron>
            <Clock>2:10 PM<br />Tuesday<br />6/5/2018</Clock>
            <NotifyWrap>
              <Svg w={18} h={16}><path d="M1 1h16v10H8l-3 4v-4H1z" fill="#fff" /><path d="M4 4h10M4 7h10" stroke="#222" /></Svg>
              <NotifyBadge>3</NotifyBadge>
            </NotifyWrap>
            <TrayRule />
          </Tray>
        </Taskbar>
      </Screen>
    </>
  );
}
